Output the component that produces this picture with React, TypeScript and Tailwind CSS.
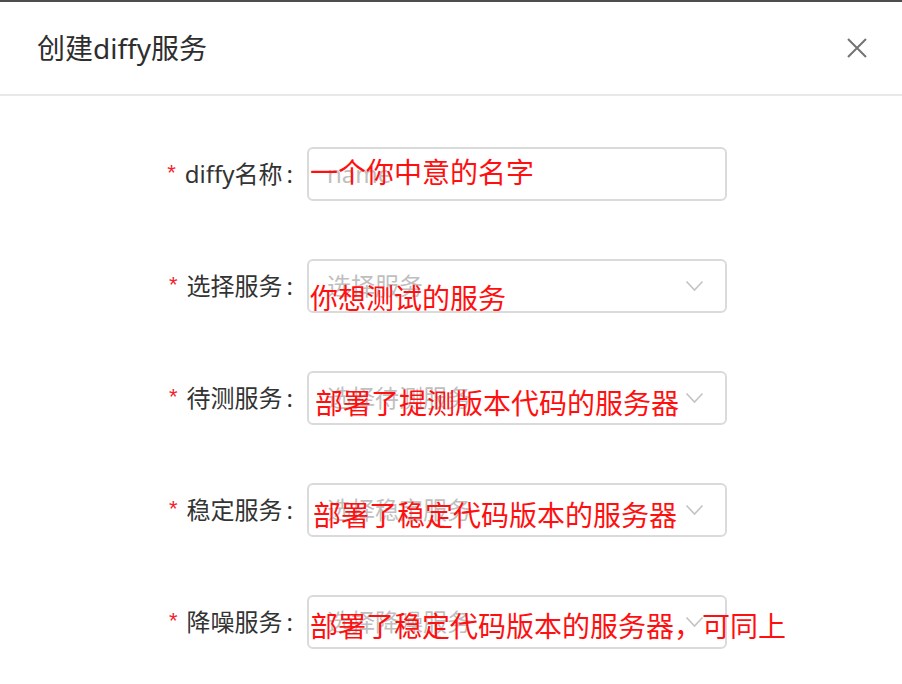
import React from "react";

const font = { fontFamily: '"Noto Sans", "Noto Sans CJK SC", sans-serif' };

function Chevron() {
  return (
    <svg width="19" height="12" viewBox="0 0 19 12" className="shrink-0">
      <polyline points="1.5,1.5 9.5,10 17.5,1.5" fill="none" stroke="#c4c4c4" strokeWidth="1.6" />
    </svg>
  );
}

type Row = {
  label: string;
  placeholder: string;
  select: boolean;
  note: string;
  noteLeft: string;
  noteTop: string;
};

const rows: Row[] = [
  { label: "diffy名称", placeholder: "name", select: false, note: "一个你中意的名字", noteLeft: "left-[3px]", noteTop: "top-[11px]" },
  { label: "选择服务", placeholder: "选择服务", select: true, note: "你想测试的服务", noteLeft: "left-[3px]", noteTop: "top-[25px]" },
  { label: "待测服务", placeholder: "选择待测服务", select: true, note: "部署了提测版本代码的服务器", noteLeft: "left-[8px]", noteTop: "top-[18px]" },
  { label: "稳定服务", placeholder: "选择稳定服务", select: true, note: "部署了稳定代码版本的服务器", noteLeft: "left-[6px]", noteTop: "top-[18px]" },
  { label: "降噪服务", placeholder: "选择降噪服务", select: true, note: "部署了稳定代码版本的服务器，可同上", noteLeft: "left-[3px]", noteTop: "top-[17px]" },
];

export default function App() {
  return (
    <div className="w-[902px] h-[684px] bg-white border-t-2 border-[#4d4d4d] overflow-hidden" style={font}>
      <div className="h-[94px] flex items-center justify-between pl-[37px] pr-[34px] border-b-2 border-[#e8e8e8]">
        <div className="text-[28px] text-[#2e2e2e] leading-none">创建diffy服务</div>
        <svg width="22" height="22" viewBox="0 0 22 22">
          <path d="M2 2 L20 20 M20 2 L2 20" stroke="#737373" strokeWidth="2" fill="none" />
        </svg>
      </div>
      <div className="pt-[51px] flex flex-col gap-[58px]">
        {rows.map((r) => (
          <div key={r.label} className="flex items-center h-[54px]">
            <div className="w-[293px] flex justify-end items-center text-[24px] text-[#333333] leading-none">
              <span className="text-[#f5222d] text-[22px] mr-[9px] -mt-[2px]" style={{ fontFamily: '"Liberation Sans", sans-serif' }}>*</span>
              <span>{r.label}</span>
              <span className="ml-[4px]">:</span>
            </div>
            <div className="relative ml-[14px] w-[420px] h-[54px]">
              <div className="w-full h-full border-2 border-[#dadada] rounded-[6px] flex items-center justify-between pl-[18px] pr-[21px] bg-white">
                <span className="text-[24px] text-[#bfbfbf] leading-none">{r.placeholder}</span>
                {r.select && <Chevron />}
              </div>
              <div className={`absolute ${r.noteLeft} ${r.noteTop} whitespace-nowrap text-[28px] leading-none text-[#ff1010]`}>
                {r.note}
              </div>
            </div>
          </div>
        ))}
      </div>
    </div>
  );
}
